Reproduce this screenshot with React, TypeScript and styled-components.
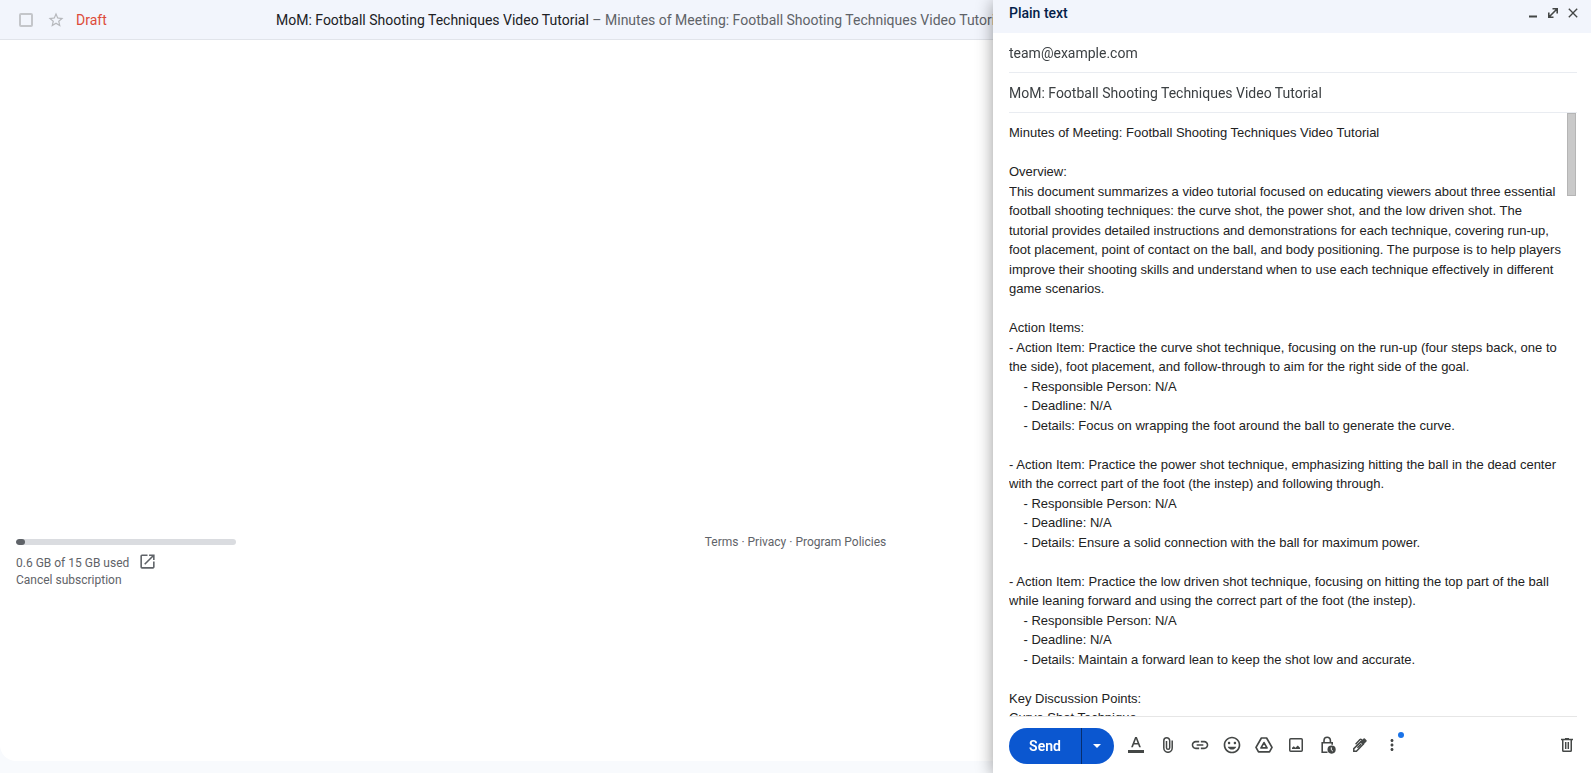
import React from 'react';
import styled, { createGlobalStyle } from 'styled-components';
import {
  MdClose,
  MdLink,
  MdMoreVert,
  MdOpenInNew,
  MdOutlineInsertEmoticon,
  MdStarBorder,
} from 'react-icons/md';

const GlobalStyle = createGlobalStyle`
  *, *::before, *::after { box-sizing: border-box; }
  body {
    margin: 0;
    background: #f8fafd;
    font-family: Roboto, "Liberation Sans", sans-serif;
    font-size: 14px;
    line-height: 20px;
    color: #202124;
  }
  button, input, textarea { font: inherit; color: inherit; }
  button { cursor: pointer; }
`;

const Page = styled.div`
  min-height: 100vh;
  padding-bottom: 12px;
  display: flex;
  flex-direction: column;
  overflow: hidden;
`;

const Mailbox = styled.main`
  flex: 1;
  display: flex;
  flex-direction: column;
  background: #fff;
  border-radius: 0 0 16px 16px;
`;

const MailRow = styled.div`
  display: flex;
  align-items: center;
  height: 40px;
  padding-left: 19px;
  background: #f2f5fc;
  border-bottom: 1px solid #e1e4ea;
  white-space: nowrap;
`;

const RowCheckbox = styled.input`
  appearance: none;
  width: 14px;
  height: 14px;
  margin: 0;
  flex: none;
  border: 2px solid #c4c6ca;
  border-radius: 2px;
`;

const PlainButton = styled.button`
  display: flex;
  align-items: center;
  justify-content: center;
  flex: none;
  padding: 0;
  border: 0;
  background: none;
`;

const StarButton = styled(PlainButton)`
  width: 18px;
  height: 18px;
  margin: 0 11px 0 14px;
  color: #b6b8bc;
`;

const Sender = styled.span`
  flex: none;
  width: 200px;
  color: #dd4b39;
`;

const Summary = styled.a`
  color: #5f6368;
  text-decoration: none;
  overflow: hidden;
`;

const Subject = styled.span`
  color: #202124;
`;

const Footer = styled.footer`
  display: grid;
  grid-template-columns: 1fr auto 1fr;
  align-items: start;
  margin-top: auto;
  padding: 0 16px 172px;
  font-size: 12px;
  line-height: 17px;
  color: #5f6368;
`;

const Storage = styled.section`
  width: 220px;
  display: flex;
  flex-direction: column;
  align-items: flex-start;
  padding-top: 6px;
`;

const Meter = styled.div`
  width: 100%;
  height: 6px;
  margin-bottom: 7px;
  border-radius: 3px;
  background: #dadce0;
  overflow: hidden;
`;

const MeterFill = styled.div`
  width: 4%;
  height: 100%;
  border-radius: 3px;
  background: #5f6368;
`;

const UsageLine = styled.div`
  display: flex;
  align-items: flex-end;
  gap: 9px;
  height: 20px;
`;

const FooterLink = styled.a`
  display: inline-flex;
  color: inherit;
  text-decoration: none;
`;

const StorageLink = styled(FooterLink)`
  align-self: flex-start;
`;

const Legal = styled.nav`
  padding-top: 1px;
`;

const Compose = styled.section`
  position: fixed;
  top: 0;
  right: 0;
  bottom: 0;
  width: 598px;
  max-width: 100%;
  display: flex;
  flex-direction: column;
  background: #fff;
  box-shadow: 0 2px 16px rgba(0, 0, 0, 0.4);
`;

const ComposeHeader = styled.header`
  display: flex;
  align-items: center;
  height: 33px;
  flex: none;
  padding: 0 8px 7px 16px;
  background: #f2f5fc;
`;

const ComposeTitle = styled.h2`
  flex: 1;
  margin: 0;
  font-size: 14px;
  line-height: 20px;
  font-weight: 500;
  color: #041e49;
`;

const HeaderButton = styled(PlainButton)`
  width: 20px;
  height: 20px;
  color: #444746;
`;

const FieldRow = styled.div`
  flex: none;
  display: flex;
  height: 40px;
  margin: 0 14px 0 16px;
  border-bottom: 1px solid #e9ecf1;
`;

const Field = styled.input`
  flex: 1;
  min-width: 0;
  padding: 0;
  border: 0;
  outline: 0;
  background: none;
  color: #3c4043;
`;

const Editor = styled.div`
  flex: 1;
  min-height: 0;
  display: flex;
  margin: 0 15px 0 16px;
`;

const Message = styled.textarea`
  flex: 1;
  min-width: 0;
  padding: 10px 4px 0 0;
  border: 0;
  outline: 0;
  resize: none;
  overflow-y: scroll;
  scrollbar-width: none;
  font-family: "Liberation Sans", Arial, sans-serif;
  font-size: 13px;
  line-height: 1.5;
  color: #222;
`;

const ScrollTrack = styled.div`
  width: 9px;
`;

const ScrollThumb = styled.div`
  height: 83px;
  background: #c9c9c9;
  border: 1px solid #b5b5b5;
`;

const Toolbar = styled.div`
  flex: none;
  display: flex;
  align-items: flex-start;
  height: 57px;
  margin-left: 16px;
  padding: 12px 8px 0 0;
  position: relative;
  &::before {
    content: '';
    position: absolute;
    top: 0;
    left: 0;
    right: 14px;
    border-top: 1px solid #e6e6e6;
  }
`;

const SendGroup = styled.div`
  display: flex;
  height: 36px;
  margin-right: 6px;
  border-radius: 18px;
  overflow: hidden;
  background: #0b57d0;
`;

const SendButton = styled(PlainButton)`
  width: 72px;
  color: #fff;
  font-weight: 600;
`;

const SendOptions = styled(PlainButton)`
  width: 33px;
  padding-right: 2px;
  border-left: 1px solid #062e6f;
  color: #fff;
`;

const ToolButton = styled(PlainButton)`
  position: relative;
  width: 32px;
  height: 34px;
  color: #444746;
`;

const Badge = styled.span`
  position: absolute;
  top: 4px;
  right: 4px;
  width: 6px;
  height: 6px;
  border-radius: 50%;
  background: #1a73e8;
`;

const Spacer = styled.div`
  flex: 1;
`;

const MinimizeIcon = () => (
  <svg width="12" height="12" viewBox="0 0 12 12">
    <path d="M2 8.5h8v2H2z" fill="currentColor" />
  </svg>
);

const ExpandIcon = () => (
  <svg width="12" height="12" viewBox="0 0 12 12" fill="none" stroke="currentColor" strokeWidth="1.6">
    <path d="M5.5 1.8h4.7v4.7M10 2 2 10M1.8 5.5v4.7h4.7" />
  </svg>
);

const CaretIcon = () => (
  <svg width="8" height="4" viewBox="0 0 8 4">
    <path d="M0 0h8L4 4z" fill="currentColor" />
  </svg>
);

const FormatIcon = () => (
  <svg width="16" height="16" viewBox="0 0 16 16" fill="currentColor">
    <path d="M0 13h16v3H0z" />
    <path d="M7.1 0h1.8l4 10.2h-1.8l-1-2.7H5.9l-1 2.7H3.1zM6.5 6h3L8 1.9z" />
  </svg>
);

const AttachIcon = () => (
  <svg width="10" height="16" viewBox="0 0 10 16" fill="none" stroke="currentColor" strokeWidth="1.5">
    <path d="M9.2 3.5v7.6a4.2 4.2 0 0 1-8.4 0V3.7a2.9 2.9 0 0 1 5.9 0v7a1.6 1.6 0 0 1-3.2 0V4" />
  </svg>
);

const DriveIcon = () => (
  <svg width="18" height="16" viewBox="0 0 18 16" fill="none" stroke="currentColor" strokeWidth="1.7" strokeLinejoin="round">
    <path d="M6.4 1h5.2l5.4 9.4-2.5 4.4h-11L1 10.4z" />
    <path d="M9 5.6l3 5.3H6z" />
  </svg>
);

const ImageIcon = () => (
  <svg width="14" height="14" viewBox="0 0 14 14">
    <rect x=".75" y=".75" width="12.5" height="12.5" rx="1" fill="none" stroke="currentColor" strokeWidth="1.5" />
    <path d="M3 11V9.8l1.8-1.6 1.6 1.6L8.8 7.6l2.2 2.2V11z" fill="currentColor" />
  </svg>
);

const LockClockIcon = () => (
  <svg width="15" height="18" viewBox="0 0 15 18" fill="none" stroke="currentColor" strokeWidth="1.6">
    <path d="M3 6.5V4.4a3.2 3.2 0 0 1 6.4 0v2.1M6.5 16.2H1.2V6.7h10v2" />
    <circle cx="10.6" cy="13.6" r="4.1" fill="currentColor" stroke="none" />
    <path d="M10.3 11.4v2.4l1.6 1.3" stroke="#fff" strokeWidth="1" />
  </svg>
);

const PenIcon = () => (
  <svg width="14" height="14" viewBox="0 0 14 14" fill="none" stroke="currentColor" strokeWidth="1.5">
    <path d="M.8 13.2v-2.6L8 3.6 10.4 6 3.4 13.2z" />
    <path d="M7 3.9 10.6.5q.6-.5 1.2 0l1.7 1.7q.5.6 0 1.2L10 7z" fill="currentColor" stroke="none" />
    <path d="M2.6 6.2 7 1.6q.7-.7 1.4 0l.9.9M4.4 9.8l3.8-3.7" />
  </svg>
);

const TrashIcon = () => (
  <svg width="12" height="14" viewBox="0 0 12 14" fill="none" stroke="currentColor" strokeWidth="1.5">
    <path d="M0 1.6h12M4 .7h4M1.75 2v10.4q0 .8.8.8h6.9q.8 0 .8-.8V2M4.7 4v7M7.3 4v7" />
  </svg>
);

const message = `Minutes of Meeting: Football Shooting Techniques Video Tutorial

Overview:
This document summarizes a video tutorial focused on educating viewers about three essential football shooting techniques: the curve shot, the power shot, and the low driven shot. The tutorial provides detailed instructions and demonstrations for each technique, covering run-up, foot placement, point of contact on the ball, and body positioning. The purpose is to help players improve their shooting skills and understand when to use each technique effectively in different game scenarios.

Action Items:
- Action Item: Practice the curve shot technique, focusing on the run-up (four steps back, one to the side), foot placement, and follow-through to aim for the right side of the goal.
    - Responsible Person: N/A
    - Deadline: N/A
    - Details: Focus on wrapping the foot around the ball to generate the curve.

- Action Item: Practice the power shot technique, emphasizing hitting the ball in the dead center with the correct part of the foot (the instep) and following through.
    - Responsible Person: N/A
    - Deadline: N/A
    - Details: Ensure a solid connection with the ball for maximum power.

- Action Item: Practice the low driven shot technique, focusing on hitting the top part of the ball while leaning forward and using the correct part of the foot (the instep).
    - Responsible Person: N/A
    - Deadline: N/A
    - Details: Maintain a forward lean to keep the shot low and accurate.

Key Discussion Points:
Curve Shot Technique`;

const subject = 'MoM: Football Shooting Techniques Video Tutorial';

const tools = [
  { label: 'Formatting options', icon: <FormatIcon /> },
  { label: 'Attach files', icon: <AttachIcon /> },
  { label: 'Insert link', icon: <MdLink size={20} /> },
  { label: 'Insert emoji', icon: <MdOutlineInsertEmoticon size={20} /> },
  { label: 'Insert files using Drive', icon: <DriveIcon /> },
  { label: 'Insert photo', icon: <ImageIcon /> },
  { label: 'Toggle confidential mode', icon: <LockClockIcon /> },
  { label: 'Insert signature', icon: <PenIcon /> },
];

export default function App() {
  return (
    <>
      <GlobalStyle />
      <Page>
        <Mailbox>
          <MailRow>
            <RowCheckbox type="checkbox" aria-label="Select conversation" />
            <StarButton type="button" aria-label="Star">
              <MdStarBorder size={18} />
            </StarButton>
            <Sender>Draft</Sender>
            <Summary href="#draft">
              <Subject>{subject}</Subject> – Minutes of Meeting: Football Shooting Techniques Video Tutorial
            </Summary>
          </MailRow>
          <Footer>
            <Storage aria-label="Storage">
              <Meter>
                <MeterFill />
              </Meter>
              <UsageLine>
                <span>0.6 GB of 15 GB used</span>
                <StorageLink href="#storage" aria-label="Manage storage">
                  <MdOpenInNew size={19} />
                </StorageLink>
              </UsageLine>
              <FooterLink href="#cancel">Cancel subscription</FooterLink>
            </Storage>
            <Legal aria-label="Legal">
              <FooterLink href="#terms">Terms</FooterLink> · <FooterLink href="#privacy">Privacy</FooterLink> ·{' '}
              <FooterLink href="#policies">Program Policies</FooterLink>
            </Legal>
          </Footer>
        </Mailbox>
      </Page>
      <Compose aria-label="Compose message">
        <ComposeHeader>
          <ComposeTitle>Plain text</ComposeTitle>
          <HeaderButton type="button" aria-label="Minimize">
            <MinimizeIcon />
          </HeaderButton>
          <HeaderButton type="button" aria-label="Full screen">
            <ExpandIcon />
          </HeaderButton>
          <HeaderButton type="button" aria-label="Close">
            <MdClose size={16} />
          </HeaderButton>
        </ComposeHeader>
        <FieldRow>
          <Field type="email" aria-label="To" defaultValue="team@example.com" />
        </FieldRow>
        <FieldRow>
          <Field type="text" aria-label="Subject" defaultValue={subject} />
        </FieldRow>
        <Editor>
          <Message aria-label="Message body" spellCheck={false} defaultValue={message} />
          <ScrollTrack>
            <ScrollThumb />
          </ScrollTrack>
        </Editor>
        <Toolbar>
          <SendGroup>
            <SendButton type="button">Send</SendButton>
            <SendOptions type="button" aria-label="More send options">
              <CaretIcon />
            </SendOptions>
          </SendGroup>
          {tools.map((tool) => (
            <ToolButton key={tool.label} type="button" aria-label={tool.label}>
              {tool.icon}
            </ToolButton>
          ))}
          <ToolButton type="button" aria-label="More options">
            <MdMoreVert size={18} />
            <Badge />
          </ToolButton>
          <Spacer />
          <ToolButton type="button" aria-label="Discard draft">
            <TrashIcon />
          </ToolButton>
        </Toolbar>
      </Compose>
    </>
  );
}
